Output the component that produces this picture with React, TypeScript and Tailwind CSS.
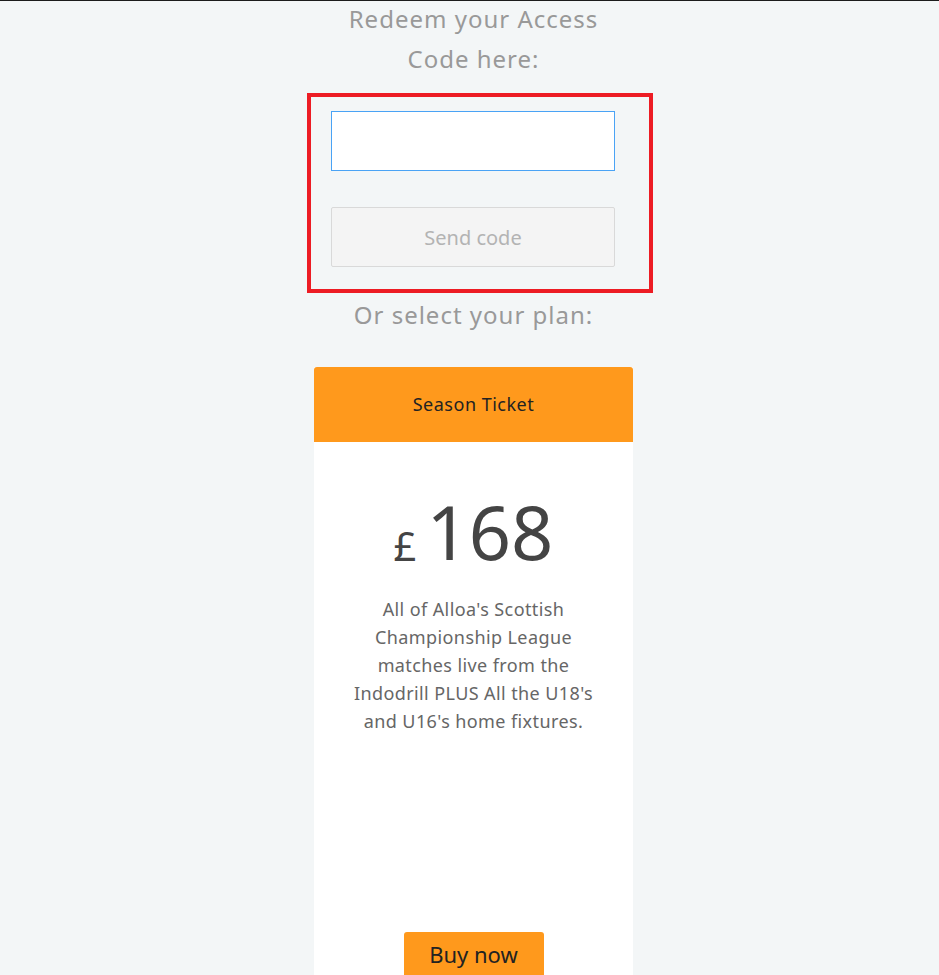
import React from 'react';

const font = { fontFamily: '"Noto Sans", "Open Sans", sans-serif' };

const App = () => {
  return (
    <div className="min-h-[975px] bg-[#f3f6f7] border-t border-[#1c1c1c] overflow-hidden pl-[8px]" style={font}>
      <div className="mx-auto flex w-[319px] flex-col items-center">
        <h2 className="mt-[-2px] w-[290px] text-center text-[24px] leading-[40px] font-normal tracking-[1px] text-[#999999]">
          Redeem your Access
          <br />
          Code here:
        </h2>

        {/* redeem form */}
        <div className="mt-[14px] -ml-[7px] w-[346px] self-start border-4 border-[#ed1c24] px-[20px] pt-[14px] pb-[22px]">
          <input
            type="text"
            className="block h-[60px] w-[284px] border border-[#4aa3f5] bg-white px-3 outline-none"
          />
          <button className="mt-[36px] block h-[60px] w-[284px] rounded-[2px] border border-[#d9d9d9] bg-[#f4f4f4] pt-[2px] text-[20px] text-[#b3b3b3]">
            Send code
          </button>
        </div>

        <p className="mt-[6px] text-[24px] leading-[32px] tracking-[1px] text-[#999999]">Or select your plan:</p>

        {/* plan card */}
        <div className="mt-[36px] w-[319px] bg-white">
          <div className="flex h-[75px] items-center justify-center rounded-t-[3px] bg-[#ff991c] text-[18px] tracking-[0.5px] text-[#222222]">
            Season Ticket
          </div>
          <div className="flex flex-col items-center pt-[50px]">
            <div className="flex items-end text-[#444444]">
              <span className="mb-[6px] mr-[10px] text-[40px] leading-none">£</span>
              <span className="text-[74px] leading-[80px]">168</span>
            </div>
            <p className="mt-[23px] w-[260px] text-center text-[18px] leading-[28px] tracking-[0.4px] text-[#666666]">
              All of Alloa's Scottish
              <br />
              Championship League
              <br />
              matches live from the
              <br />
              Indodrill PLUS All the U18's
              <br />
              and U16's home fixtures.
            </p>
            <button className="mt-[197px] h-[50px] w-[140px] rounded-t-[3px] bg-[#ff991c] pb-[6px] text-[22px] text-[#222222]">
              Buy now
            </button>
          </div>
        </div>
      </div>
    </div>
  );
};

export default App;
